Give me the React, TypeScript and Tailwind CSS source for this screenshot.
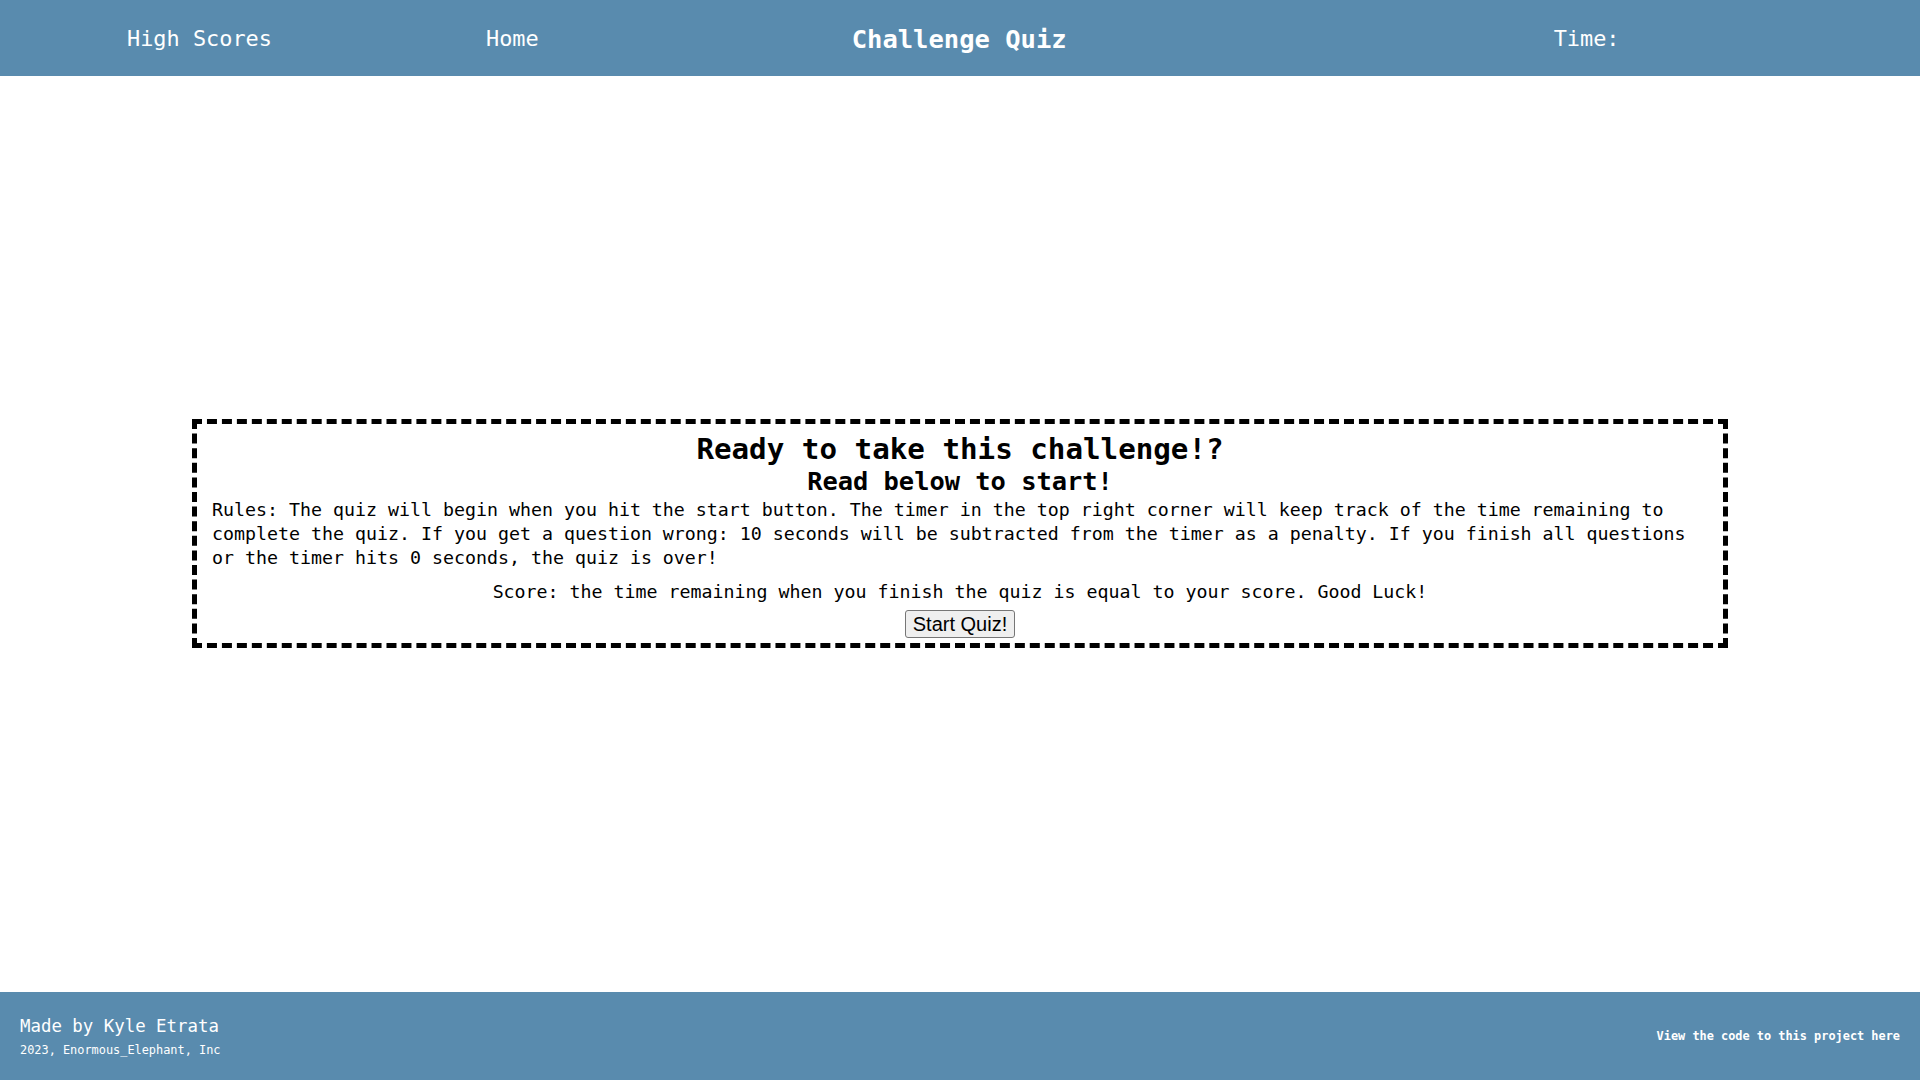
import React from "react";

const mono = "font-['DejaVu_Sans_Mono','Liberation_Mono',monospace]";

export default function App() {
  return (
    <div className={`w-[1920px] h-[1080px] flex flex-col bg-white ${mono}`}>
      <header className="h-[76px] pt-[2px] bg-[#598bae] text-white flex items-center shrink-0">
        <a className="ml-[127px] text-[21.9px] leading-[26px]">High Scores</a>
        <a className="ml-[214px] text-[21.9px] leading-[26px]">Home</a>
        <h1 className="ml-[313px] text-[25.5px] leading-[30px] font-bold">Challenge Quiz</h1>
        <div className="ml-[487px] text-[21.9px] leading-[26px]">Time: <span></span></div>
      </header>

      <main className="flex-1 flex flex-col items-center">
        <section className="mt-[343px] w-[1536px] border-[5px] border-dashed border-black pt-[6px] px-[15px] pb-[5px] text-black flex flex-col items-center">
          <h2 className="text-[29.2px] leading-[38px] mb-[-4px] font-bold">Ready to take this challenge!?</h2>
          <h3 className="text-[25.4px] leading-[34px] font-bold">Read below to start!</h3>
          <p className="self-stretch text-[18.27px] leading-[24px]">
            Rules: The quiz will begin when you hit the start button. The timer in the top right corner will keep track of the time remaining to complete the quiz. If you get a question wrong: 10 seconds will be subtracted from the timer as a penalty. If you finish all questions or the timer hits 0 seconds, the quiz is over!
          </p>
          <p className="mt-[10px] text-[18.27px] leading-[24px] text-center">
            Score: the time remaining when you finish the quiz is equal to your score. Good Luck!
          </p>
          <button className="mt-[6px] h-[28px] px-[7px] bg-[#efefef] border border-[#767676] rounded-[3px] text-[20px] leading-[24px] text-black font-['Liberation_Sans',Arial,sans-serif]">
            Start Quiz!
          </button>
        </section>
      </main>

      <footer className="h-[88px] bg-[#598bae] text-white flex items-center justify-between px-[20px] shrink-0">
        <div className="flex flex-col">
          <p className="text-[17.4px] leading-[22px]">Made by Kyle Etrata</p>
          <p className="mt-[5px] text-[11.9px] leading-[16px]">2023, Enormous_Elephant, Inc</p>
        </div>
        <a className="text-[11.9px] leading-[16px] font-bold">View the code to this project here</a>
      </footer>
    </div>
  );
}
